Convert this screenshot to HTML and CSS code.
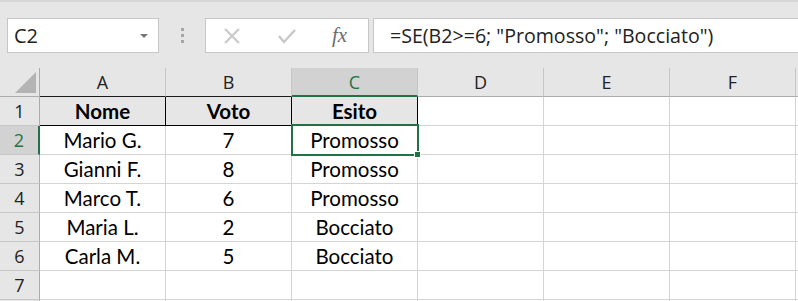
FILE: index.html
```html
<!DOCTYPE html>
<html>
<head>
    <meta charset="UTF-8">
    <title>Esiti</title>
    <link rel="stylesheet" href="styles.css">
</head>
<body>
    <div class="toolbar">
        <div class="name-box">
            <span class="name-text">C2</span>
            <span class="name-arrow"></span>
        </div>
        <div class="grip">
            <span></span><span></span><span></span>
        </div>
        <div class="fx-box">
            <svg class="fx-icon" width="18" height="18" viewBox="0 0 18 18">
                <path d="M2 2 L16 16 M16 2 L2 16" stroke="#c8c8c8" stroke-width="2" fill="none"/>
            </svg>
            <svg class="fx-icon" width="20" height="18" viewBox="0 0 20 18">
                <path d="M2 9 L7 15 L18 3" stroke="#c8c8c8" stroke-width="2.4" fill="none"/>
            </svg>
            <span class="fx-label">fx</span>
        </div>
        <div class="formula">=SE(B2&gt;=6; "Promosso"; "Bocciato")</div>
    </div>

    <div class="sheet">
        <!-- intestazioni colonne -->
        <div class="corner">
            <svg width="22" height="21" viewBox="0 0 22 21">
                <polygon points="21,0 21,21 0,21" fill="#b4b4b4"/>
            </svg>
        </div>
        <div class="col-head dark">A</div>
        <div class="col-head dark">B</div>
        <div class="col-head active">C</div>
        <div class="col-head">D</div>
        <div class="col-head">E</div>
        <div class="col-head">F</div>
        <div class="col-head"></div>

        <!-- riga 1 -->
        <div class="row-head">1</div>
        <div class="cell title">Nome</div>
        <div class="cell title">Voto</div>
        <div class="cell title">Esito</div>
        <div class="cell"></div>
        <div class="cell"></div>
        <div class="cell"></div>
        <div class="cell"></div>

        <!-- riga 2 -->
        <div class="row-head active">2</div>
        <div class="cell">Mario G.</div>
        <div class="cell">7</div>
        <div class="cell selected">Promosso
            <span class="selection"></span>
            <span class="handle"></span>
        </div>
        <div class="cell"></div>
        <div class="cell"></div>
        <div class="cell"></div>
        <div class="cell"></div>

        <!-- riga 3 -->
        <div class="row-head">3</div>
        <div class="cell">Gianni F.</div>
        <div class="cell">8</div>
        <div class="cell">Promosso</div>
        <div class="cell"></div>
        <div class="cell"></div>
        <div class="cell"></div>
        <div class="cell"></div>

        <!-- riga 4 -->
        <div class="row-head">4</div>
        <div class="cell">Marco T.</div>
        <div class="cell">6</div>
        <div class="cell">Promosso</div>
        <div class="cell"></div>
        <div class="cell"></div>
        <div class="cell"></div>
        <div class="cell"></div>

        <!-- riga 5 -->
        <div class="row-head">5</div>
        <div class="cell">Maria L.</div>
        <div class="cell">2</div>
        <div class="cell">Bocciato</div>
        <div class="cell"></div>
        <div class="cell"></div>
        <div class="cell"></div>
        <div class="cell"></div>

        <!-- riga 6 -->
        <div class="row-head">6</div>
        <div class="cell">Carla M.</div>
        <div class="cell">5</div>
        <div class="cell">Bocciato</div>
        <div class="cell"></div>
        <div class="cell"></div>
        <div class="cell"></div>
        <div class="cell"></div>

        <!-- riga 7 -->
        <div class="row-head">7</div>
        <div class="cell"></div>
        <div class="cell"></div>
        <div class="cell"></div>
        <div class="cell"></div>
        <div class="cell"></div>
        <div class="cell"></div>
        <div class="cell"></div>

        <!-- riga 8, appena visibile -->
        <div class="row-head"></div>
        <div class="cell"></div>
        <div class="cell"></div>
        <div class="cell"></div>
        <div class="cell"></div>
        <div class="cell"></div>
        <div class="cell"></div>
        <div class="cell"></div>
    </div>
</body>
</html>
```

FILE: styles.css
```css
* {
    box-sizing: border-box;
    margin: 0;
    padding: 0;
}
body {
    background: #fff;
    color: #000;
    width: 798px;
    height: 301px;
    overflow: hidden;
}
.toolbar {
    height: 68px;
    background: #e6e6e6;
    border-top: 2px solid #d6d6d6;
    padding: 16px 0 0 7px;
    display: flex;
    align-items: flex-start;
    font-family: "Open Sans", "Noto Sans", sans-serif;
}
.name-box {
    width: 152px;
    height: 35px;
    background: #fff;
    border: 1px solid #c6c6c6;
    display: flex;
    align-items: center;
    justify-content: space-between;
    padding: 0 10px 0 6px;
}
.name-text {
    font-size: 20px;
    color: #222;
}
.name-arrow {
    width: 0;
    height: 0;
    border-left: 4px solid transparent;
    border-right: 4px solid transparent;
    border-top: 4px solid #777;
}
.grip {
    width: 46px;
    height: 35px;
    display: flex;
    flex-direction: column;
    align-items: center;
    justify-content: center;
    gap: 3px;
}
.grip span {
    width: 3px;
    height: 3px;
    background: #a6a6a6;
}
.fx-box {
    width: 164px;
    height: 35px;
    background: #fff;
    border: 1px solid #c6c6c6;
    display: flex;
    align-items: center;
    padding-left: 17px;
    gap: 36px;
}
.fx-label {
    font-family: "Liberation Serif", "DejaVu Serif", serif;
    font-style: italic;
    font-size: 21px;
    color: #6e6e6e;
    margin-left: -1px;
}
.formula {
    flex: 1;
    margin-left: 4px;
    height: 35px;
    background: #fff;
    border: 1px solid #c6c6c6;
    border-right: none;
    padding-left: 16px;
    font-size: 19.6px;
    line-height: 33px;
    color: #222;
    white-space: nowrap;
}
.sheet {
    display: grid;
    grid-template-columns: 40px repeat(6, 126px) 40px;
    grid-auto-rows: 29px;
    font-family: "Lato", "Open Sans", sans-serif;
}
.corner {
    background: #e6e6e6;
    border-right: 1px solid #ababab;
    border-bottom: 1px solid #ababab;
    padding: 4px 0 0 15px;
}
.corner svg {
    display: block;
}
.col-head {
    background: #e6e6e6;
    border-right: 1px solid #c6c6c6;
    border-bottom: 1px solid #ababab;
    font-family: "Open Sans", "Noto Sans", sans-serif;
    font-size: 18px;
    line-height: 29px;
    text-align: center;
    color: #222;
}
.col-head.dark {
    border-bottom-color: #1a1a1a;
}
.col-head.active {
    background: #d2d2d2;
    color: #217346;
    border-bottom: 2px solid #217346;
}
.row-head {
    background: #e6e6e6;
    border-right: 1px solid #ababab;
    border-bottom: 1px solid #c6c6c6;
    font-family: "Open Sans", "Noto Sans", sans-serif;
    font-size: 18px;
    line-height: 28px;
    text-align: center;
    color: #222;
}
.row-head.active {
    background: #d2d2d2;
    color: #217346;
    border-right: 2px solid #217346;
}
.cell {
    border-right: 1px solid #d4d4d4;
    border-bottom: 1px solid #d4d4d4;
    font-size: 20.5px;
    line-height: 28px;
    text-align: center;
    white-space: nowrap;
    position: relative;
}
.cell.title {
    background: #e7e6e6;
    font-weight: bold;
    border-right-color: #000;
    border-bottom-color: #000;
}
.cell.selected {
    z-index: 2;
}
.selection {
    position: absolute;
    left: -1px;
    top: -2px;
    width: 128px;
    height: 32px;
    border: 2px solid #217346;
}
.handle {
    position: absolute;
    left: 122px;
    top: 25px;
    width: 7px;
    height: 7px;
    background: #217346;
    border: 1px solid #fff;
}
```
